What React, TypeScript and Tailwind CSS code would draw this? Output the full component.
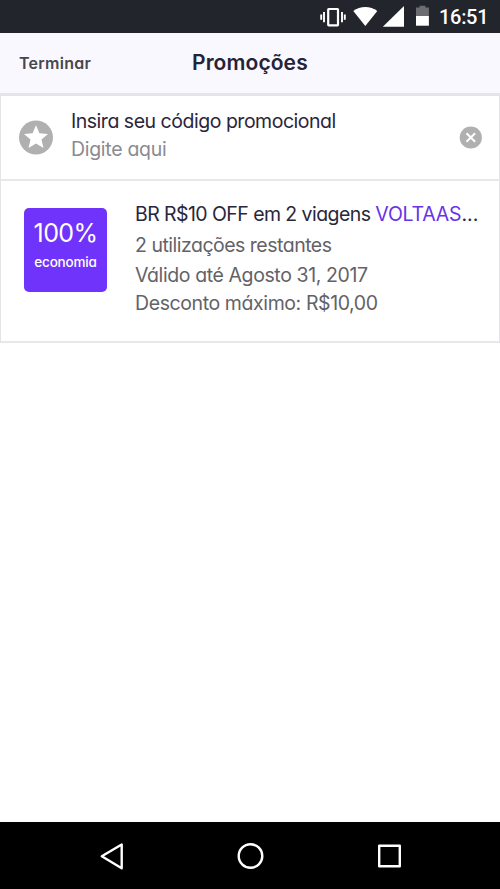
function StatusBar() {
  return (
    <div className="flex h-[33px] shrink-0 items-start bg-[#22252b] pl-[320px]">
      <svg width="118" height="33" viewBox="0 0 118 33" className="shrink-0">
        <rect x="8.2" y="9" width="9.8" height="16.300" rx="0.500" fill="none" stroke="#fff" strokeWidth="2.2" />
        <path d="M1.2 14.5v5.2M4 12v10.2M22 12v10.2M24.800 14.5v5.2" stroke="#fff" strokeWidth="1.900" />
        <path d="M33.3 11C40 5.5 50.600 5.500 57.300 11L45.300 26z" fill="#fff" />
        <path d="M84 6v20.700H62.800z" fill="#fff" />
        <path d="M96 17V7.500h3.500V5.800h6v1.700h3.400V17z" fill="#6b6d71" />
        <path d="M96 16h12.900v9.700H96z" fill="#fff" />
      </svg>
      <span className="mt-[5px] ml-px font-['Roboto',sans-serif] text-[20px] leading-[24px] font-medium tracking-[-0.3px] text-white">
        16:51
      </span>
    </div>
  );
}

function Header() {
  return (
    <header className="flex h-[63px] shrink-0 items-start border-b-[3px] border-[#e5e4ea] bg-[#f9f8fe] pl-[19px]">
      <button className="mt-[18px] w-[173px] text-left text-[16px] leading-[24px] font-semibold tracking-[0.25px] text-[#47464d]">
        Terminar
      </button>
      <h1 className="mt-[15px] text-[21px] leading-[29px] font-semibold tracking-[0.1px] text-[#262238]">Promoções</h1>
    </header>
  );
}

function PromoEntry() {
  return (
    <section className="flex h-[85px] border-b-2 border-[#e8e8ea] pt-[12px] pr-[16px] pl-[17px]">
      <svg width="36" height="36" viewBox="0 0 36 36" className="mt-[11px] shrink-0">
        <circle cx="18" cy="18.500" r="17" fill="#b0b0b0" />
        <path d="M18 6.300l3.400 7.900 8.600.700-6.500 5.600 2 8.400-7.500-4.500-7.500 4.500 2-8.400-6.500-5.600 8.600-.700z" fill="#fff" />
      </svg>
      <div className="ml-[17px] flex-1 text-[19.500px] leading-[27px]">
        <p className="h-[28px] tracking-[-0.48px] text-[#2a263b]">Insira seu código promocional</p>
        <p className="tracking-[-0.3px] text-[#8b8a90]">Digite aqui</p>
      </div>
      <svg width="24" height="24" viewBox="0 0 24 24" className="mt-[17px] shrink-0">
        <circle cx="11.800" cy="12.500" r="11.100" fill="#b0b0b0" />
        <path d="M7.500 8.200l8.600 8.600M16.100 8.200l-8.600 8.600" stroke="#fff" strokeWidth="2" />
      </svg>
    </section>
  );
}

function PromoCard() {
  return (
    <section className="flex h-[162px] border-b-2 border-[#e8e8ea] pt-[18px] pl-[23px]">
      <div className="mt-[9px] flex h-[84px] w-[83px] shrink-0 flex-col items-center rounded-[5px] bg-[#6f33fb] text-white">
        <p className="mt-[9px] text-[25px] leading-[32px] tracking-[-0.6px] whitespace-nowrap">100%</p>
        <p className="mt-[3px] text-[13.500px] leading-[20px] font-medium tracking-[-0.2px]">economia</p>
      </div>
      <div className="ml-[28px] text-[19.500px] leading-[30px] whitespace-nowrap text-[#636268]">
        <p className="h-[31px] tracking-[-0.57px] text-[#2a263b]">
          BR R$10 OFF em 2 viagens <span className="tracking-[-0.2px] text-[#6833e8]">VOLTAAS</span>
          <span className="tracking-[0px]">...</span>
        </p>
        <p className="h-[30px] tracking-[-0.5px]">2 utilizações restantes</p>
        <p className="h-[28px] tracking-[-0.4px]">Válido até Agosto 31, 2017</p>
        <p className="tracking-[-0.4px]">Desconto máximo: R$10,00</p>
      </div>
    </section>
  );
}

function NavigationBar() {
  return (
    <nav className="h-[67px] shrink-0 bg-black">
      <svg width="500" height="67" viewBox="0 0 500 67" fill="none" stroke="#fff" strokeWidth="2.400" strokeLinejoin="round">
        <path d="M121.700 22.500v23.800L101.800 34.300z" />
        <circle cx="250.500" cy="34" r="11.800" />
        <rect x="379.200" y="23.700" width="20.600" height="20.600" />
      </svg>
    </nav>
  );
}

export default function App() {
  return (
    <div className="flex h-[889px] w-[500px] flex-col overflow-hidden bg-white font-['Inter',sans-serif] [font-feature-settings:'cv11']">
      <StatusBar />
      <Header />
      <main className="flex-1">
        <div className="border-x border-[#e4e4e8]">
          <PromoEntry />
          <PromoCard />
        </div>
      </main>
      <NavigationBar />
    </div>
  );
}
